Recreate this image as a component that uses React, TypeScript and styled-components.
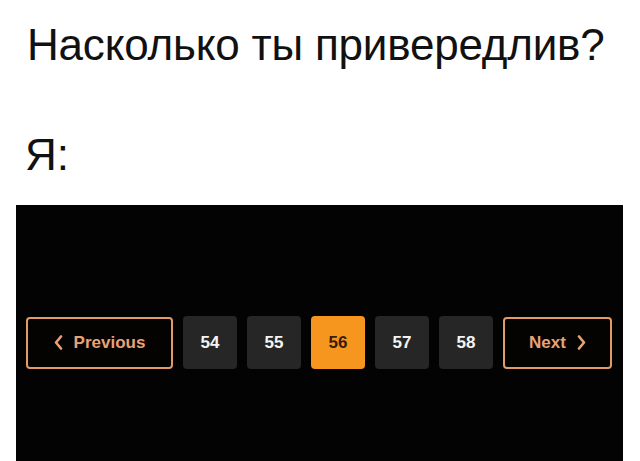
import styled, { createGlobalStyle } from "styled-components";

const GlobalStyle = createGlobalStyle`
  html, body {
    margin: 0;
    padding: 0;
    background: #ffffff;
  }

  body {
    font-family: "Liberation Sans", Arial, sans-serif;
    overflow: hidden;
  }
`;

const pages = [54, 55, 56, 57, 58];
const current = 56;

const Chevron = ({ dir }: { dir: "left" | "right" }) => (
  <svg width="9" height="15" viewBox="0 0 9 15" fill="none">
    <path
      d={dir === "left" ? "M7 1.5 L2 7.5 L7 13.5" : "M2 1.5 L7 7.5 L2 13.5"}
      stroke="currentColor"
      strokeWidth="2.6"
      strokeLinecap="round"
      strokeLinejoin="round"
    />
  </svg>
);

export default function App() {
  return (
    <>
      <GlobalStyle />
      <Page>
        <Question>Насколько ты привередлив?</Question>
        <Answer>Я:</Answer>
        <Panel>
          <Pager>
            <NavButton $wide>
              <Chevron dir="left" />
              Previous
            </NavButton>
            {pages.map((n) => (
              <PageBox key={n} $active={n === current}>
                {n}
              </PageBox>
            ))}
            <NavButton>
              Next
              <Chevron dir="right" />
            </NavButton>
          </Pager>
        </Panel>
      </Page>
    </>
  );
}

const Page = styled.div`
  width: 640px;
  height: 461px;
  display: flex;
  flex-direction: column;
`;

const Question = styled.h1`
  margin: 20px 0 0 27px;
  font-size: 44px;
  font-weight: 400;
  line-height: 50px;
  color: #111111;
  letter-spacing: -0.2px;
`;

const Answer = styled.div`
  margin: 60px 0 0 25px;
  font-size: 44px;
  line-height: 50px;
  color: #111111;
`;

const Panel = styled.div`
  flex: 1;
  margin: 25px 17px 0 16px;
  background: #030303;
  padding: 111px 0 0 10px;
`;

const Pager = styled.div`
  display: flex;
  align-items: center;
  gap: 10px;
`;

const NavButton = styled.button<{ $wide?: boolean }>`
  width: ${(p) => (p.$wide ? "147px" : "109px")};
  height: 52px;
  display: flex;
  align-items: center;
  justify-content: center;
  gap: 11px;
  background: #050302;
  border: 2px solid #e39a66;
  border-radius: 4px;
  color: #e8a274;
  font-family: "Liberation Sans", Arial, sans-serif;
  font-size: 17px;
  font-weight: 700;
  padding: 0;
`;

const PageBox = styled.div<{ $active?: boolean }>`
  width: 54px;
  height: 53px;
  display: flex;
  align-items: center;
  justify-content: center;
  border-radius: 4px;
  background: ${(p) => (p.$active ? "#f7961e" : "#262626")};
  color: ${(p) => (p.$active ? "#3b1c08" : "#f4f4f4")};
  font-size: 17px;
  font-weight: 700;
`;
